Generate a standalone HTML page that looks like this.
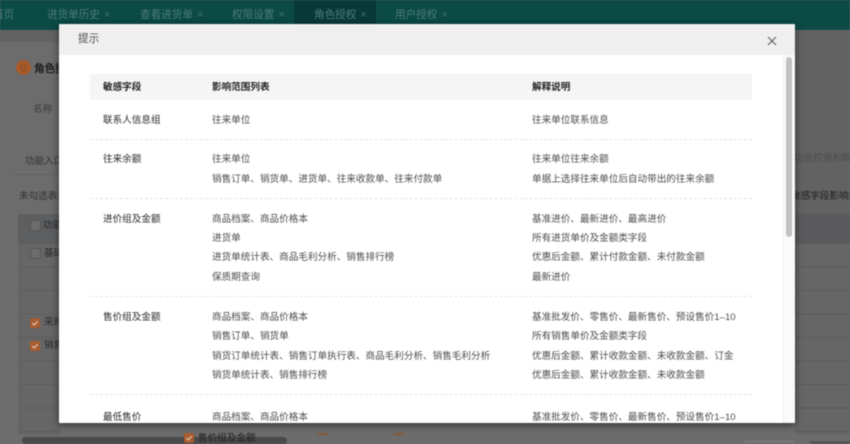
<!DOCTYPE html>
<html lang="zh">
<head>
<meta charset="utf-8">
<style>
html,body{margin:0;padding:0;width:850px;height:444px;overflow:hidden;background:#6c6c6c}
body{position:relative;font-family:"Liberation Sans","Noto Sans CJK SC",sans-serif;font-size:9.6px;color:#4c4c4c}
.t{position:absolute;white-space:nowrap;line-height:14px}
.b{position:absolute}
#bg{position:absolute;left:0;top:0;width:850px;height:444px;filter:blur(.6px)}
#bg .t{color:#2f2f2f}
#top{position:absolute;left:0;top:0;width:850px;height:30px;background:#0b4a45;filter:blur(.4px)}
#top .t{color:#4f7d78;font-size:10.6px;top:8px}
#top span{font-size:11px;margin-left:4px;color:#44716c}
#m{position:absolute;left:59px;top:24px;width:736px;height:399px;background:#fff;box-shadow:0 2px 8px rgba(0,0,0,.55);overflow:hidden;border-radius:1px;filter:blur(.4px)}
.h{font-weight:bold;color:#222}
.c1{color:#2a2a2a}
.d{position:absolute;left:31px;width:662px;border-top:1px dashed #e4e4e4;height:0}
.cb{position:absolute;width:10px;height:10px;border-radius:2px;background:#a85c30}
.cb svg{position:absolute;left:0;top:0}
.cu{position:absolute;width:9px;height:9px;border-radius:2px;border:1px solid #555;background:#6c6c6c}
</style>
</head>
<body>
<div id="bg">
  <div class="b" style="left:0;top:30px;width:850px;height:12px;background:#626262"></div>
  <div class="b" style="left:783px;top:42px;width:67px;height:182px;background:#626262"></div>
  <div class="b" style="left:18px;top:214px;width:42px;height:30px;background:#5c5e60"></div>
  <div class="b" style="left:795px;top:214px;width:55px;height:30px;background:#5a5a5c"></div>
  <div class="b" style="left:15px;top:174px;width:45px;height:1px;background:#5e5e5e"></div>
  <div class="b" style="left:795px;top:174px;width:55px;height:1px;background:#5e5e5e"></div>
  <div class="b" style="left:19px;top:244px;width:41px;height:190px;border-left:1px solid #5e5e5e;background:repeating-linear-gradient(to bottom,#666 0,#666 22.5px,#5c5c5c 22.5px,#5c5c5c 23.5px)"></div>
  <div class="b" style="left:795px;top:244px;width:55px;height:190px;background:repeating-linear-gradient(to bottom,#666 0,#666 22.5px,#5a5a5a 22.5px,#5a5a5a 23.5px)"></div>
  <div class="b" style="left:16px;top:60px;width:15px;height:15px;border-radius:50%;background:#a85a2a"></div>
  <svg class="b" style="left:16px;top:60px" width="15" height="15"><path d="M5 5h5v3.5L7.5 11 5 8.5z" fill="none" stroke="#8c4c24" stroke-width="1"/></svg>
  <div class="t" style="left:34px;top:62px;font-size:10.6px;font-weight:bold;color:#1e1e1e">角色授权</div>
  <div class="t" style="left:33px;top:103px;color:#3a3a3a">名称</div>
  <div class="t" style="left:25px;top:155px;color:#333">功能入口</div>
  <div class="t" style="left:19px;top:190px;color:#333">未勾选表示</div>
  <div class="cu" style="left:30px;top:220px"></div>
  <div class="t" style="left:43px;top:219px;color:#2a2a2a">功能</div>
  <div class="cu" style="left:30px;top:248px"></div>
  <div class="t" style="left:44px;top:247px;color:#2a2a2a">基础</div>
  <div class="cb" style="left:30px;top:318px"><svg width="10" height="10"><path d="M2.2 5l2 2 3.6-3.8" fill="none" stroke="#e8d0b8" stroke-width="1.1"/></svg></div>
  <div class="t" style="left:44px;top:316px;color:#2a2a2a">采购</div>
  <div class="cb" style="left:30px;top:341px"><svg width="10" height="10"><path d="M2.2 5l2 2 3.6-3.8" fill="none" stroke="#e8d0b8" stroke-width="1.1"/></svg></div>
  <div class="t" style="left:44px;top:339px;color:#2a2a2a">销售</div>
  <div class="t" style="left:794px;top:152px;color:#4e4e4e">功能权限和敏感</div>
  <div class="t" style="left:791px;top:190px;color:#1e1e1e">敏感字段影响说明</div>
  <div class="b" style="left:22px;top:437px;width:265px;height:7px;border-radius:4px;background:#4a4a4a"></div>
  <div class="cb" style="left:184px;top:433px"><svg width="10" height="10"><path d="M2.2 5l2 2 3.6-3.8" fill="none" stroke="#e8d0b8" stroke-width="1.1"/></svg></div>
  <div class="t" style="left:198px;top:432px;color:#222">售价组及金额</div>
  <div class="b" style="left:318px;top:433px;width:10px;height:2px;background:#8a5a36"></div>
  <div class="b" style="left:394px;top:433px;width:10px;height:2px;background:#8a5a36"></div>
  <div class="b" style="left:744px;top:441px;width:50px;height:3px;border:1px solid #7d7d7d;border-bottom:0;box-sizing:border-box"></div>
  <div class="b" style="left:810px;top:441px;width:40px;height:3px;background:#555"></div>
</div>

<div id="top">
  <div class="t" style="left:-7px">首页</div>
  <div class="t" style="left:47px">进货单历史<span>×</span></div>
  <div class="t" style="left:140px">查看进货单<span>×</span></div>
  <div class="t" style="left:232px">权限设置<span>×</span></div>
  <div class="b" style="left:294px;top:0;width:82px;height:30px;background:#083a38"></div>
  <div class="t" style="left:314px">角色授权<span>×</span></div>
  <div class="t" style="left:395px">用户授权<span>×</span></div>
</div>

<div id="m">
  <div class="b" style="left:0;top:0;width:736px;height:31px;background:#efefef"></div>
  <div class="t" style="left:19px;top:8px;font-size:10.6px;color:#4c4c4c">提示</div>
  <svg class="b" style="left:708px;top:12px" width="10" height="10"><path d="M1 1l8 8M9 1l-8 8" stroke="#555" stroke-width="1" fill="none"/></svg>

  <div class="b" style="left:31px;top:50px;width:662px;height:26px;background:#f5f5f5"></div>
  <div class="t h" style="left:44px;top:57px">敏感字段</div>
  <div class="t h" style="left:153px;top:57px">影响范围列表</div>
  <div class="t h" style="left:473px;top:57px">解释说明</div>

  <div class="t c1" style="left:44px;top:90px">联系人信息组</div>
  <div class="t" style="left:153px;top:90px">往来单位</div>
  <div class="t" style="left:473px;top:90px">往来单位联系信息</div>
  <div class="d" style="top:115px"></div>

  <div class="t c1" style="left:44px;top:129px">往来余额</div>
  <div class="t" style="left:153px;top:129px">往来单位</div>
  <div class="t" style="left:473px;top:129px">往来单位往来余额</div>
  <div class="t" style="left:153px;top:149px">销售订单、销货单、进货单、往来收款单、往来付款单</div>
  <div class="t" style="left:473px;top:149px">单据上选择往来单位后自动带出的往来余额</div>
  <div class="d" style="top:174px"></div>

  <div class="t c1" style="left:44px;top:189px">进价组及金额</div>
  <div class="t" style="left:153px;top:189px">商品档案、商品价格本</div>
  <div class="t" style="left:473px;top:189px">基准进价、最新进价、最高进价</div>
  <div class="t" style="left:153px;top:208px">进货单</div>
  <div class="t" style="left:473px;top:208px">所有进货单价及金额类字段</div>
  <div class="t" style="left:153px;top:227px">进货单统计表、商品毛利分析、销售排行榜</div>
  <div class="t" style="left:473px;top:227px">优惠后金额、累计付款金额、未付款金额</div>
  <div class="t" style="left:153px;top:247px">保质期查询</div>
  <div class="t" style="left:473px;top:247px">最新进价</div>
  <div class="d" style="top:272px"></div>

  <div class="t c1" style="left:44px;top:287px">售价组及金额</div>
  <div class="t" style="left:153px;top:287px">商品档案、商品价格本</div>
  <div class="t" style="left:473px;top:287px">基准批发价、零售价、最新售价、预设售价1–10</div>
  <div class="t" style="left:153px;top:306px">销售订单、销货单</div>
  <div class="t" style="left:473px;top:306px">所有销售单价及金额类字段</div>
  <div class="t" style="left:153px;top:326px">销货订单统计表、销售订单执行表、商品毛利分析、销售毛利分析</div>
  <div class="t" style="left:473px;top:326px">优惠后金额、累计收款金额、未收款金额、订金</div>
  <div class="t" style="left:153px;top:345px">销货单统计表、销售排行榜</div>
  <div class="t" style="left:473px;top:345px">优惠后金额、累计收款金额、未收款金额</div>
  <div class="d" style="top:370px"></div>

  <div class="t c1" style="left:44px;top:387px">最低售价</div>
  <div class="t" style="left:153px;top:387px">商品档案、商品价格本</div>
  <div class="t" style="left:473px;top:387px">基准批发价、零售价、最新售价、预设售价1–10</div>

  <div class="b" style="left:724px;top:31px;width:12px;height:368px;background:#fafafa;border-left:1px solid #efefef;box-sizing:border-box"></div>
  <div class="b" style="left:727px;top:33px;width:6px;height:180px;border-radius:3px;background:#c1c1c1"></div>
</div>
</body>
</html>
